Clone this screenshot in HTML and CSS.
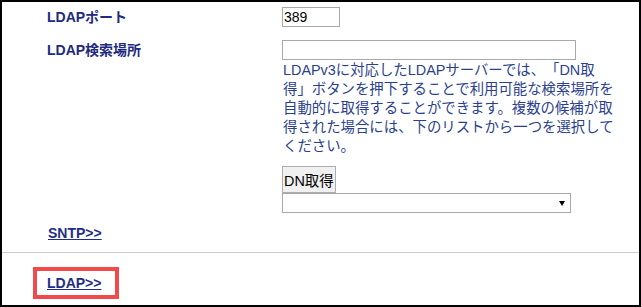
FILE: index.html
```html
<!DOCTYPE html>
<html lang="ja">
  <head>
    <meta charset="UTF-8" />
    <title>LDAP設定</title>
    <link rel="stylesheet" href="styles.css">
  </head>
  <body>
    <div class="frame">
      <div class="settings">
        <div class="row">
          <div class="label">LDAPポート</div>
          <div class="value">
            <input type="text" class="port" value="389" />
          </div>
        </div>
        <div class="row row-base">
          <div class="label">LDAP検索場所</div>
          <div class="value">
            <input type="text" class="base" />
            <p class="note">LDAPv3に対応したLDAPサーバーでは、「DN取得」ボタンを押下することで利用可能な検索場所を自動的に取得することができます。複数の候補が取得された場合には、下のリストから一つを選択してください。</p>
            <button type="button" class="dn-button">DN取得</button>
            <div class="select-wrap">
              <select class="dn-list"><option></option></select>
              <span class="arrow"></span>
            </div>
          </div>
        </div>
        <a href="#" class="link sntp">SNTP&gt;&gt;</a>
      </div>
      <div class="footer">
        <span class="highlight"><a href="#" class="link">LDAP&gt;&gt;</a></span>
      </div>
    </div>
  </body>
</html>
```

FILE: styles.css
```css
body {
  margin: 0;
  padding: 0;
  background: #fff;
  font-family: "Liberation Sans", "Noto Sans CJK JP", sans-serif;
}
.frame {
  width: 641px;
  height: 307px;
  box-sizing: border-box;
  border: 2px solid #000;
  overflow: hidden;
}
.settings {
  padding-top: 5px;
  border-bottom: 1px solid #cccccc;
}
.row {
  display: grid;
  grid-template-columns: 235px 335px;
  padding-left: 45px;
}
.row-base {
  margin-top: 13px;
}
.label {
  font-size: 14px;
  font-weight: bold;
  line-height: 20px;
  color: #1e2a80;
}
input {
  display: block;
  height: 20px;
  box-sizing: border-box;
  border: 1px solid #a9a9a9;
  padding: 0 1px;
  font-family: inherit;
  font-size: 14px;
  color: #000;
  outline: none;
}
.port {
  width: 58px;
}
.base {
  width: 294px;
}
.note {
  margin: 1px 0 0;
  padding-left: 1px;
  font-size: 14.4px;
  line-height: 19px;
  color: #2c3f8e;
  text-spacing-trim: space-all;
}
.dn-button {
  display: block;
  margin-top: 10px;
  height: 27px;
  padding: 0 1px;
  border: 1px solid #adadad;
  border-radius: 0;
  background: #f0f0f0;
  font-family: inherit;
  font-size: 14.4px;
  color: #000;
  white-space: nowrap;
}
.select-wrap {
  position: relative;
  width: 289px;
}
.dn-list {
  display: block;
  width: 289px;
  height: 20px;
  margin: 0;
  border: 1px solid #a9a9a9;
  border-radius: 0;
  background: #fff;
  appearance: none;
  -webkit-appearance: none;
}
.arrow {
  position: absolute;
  right: 6px;
  top: 8px;
  width: 0;
  height: 0;
  border-left: 3px solid transparent;
  border-right: 3px solid transparent;
  border-top: 5px solid #000;
}
.link {
  font-size: 14px;
  font-weight: bold;
  line-height: 20px;
  color: #1f2d8a;
  text-decoration: underline;
}
.sntp {
  display: block;
  width: max-content;
  margin: 10px 0 9px 46px;
}
.footer {
  padding: 14px 0 0 31px;
}
.highlight {
  display: inline-block;
  border: 4px solid #f04a4a;
  padding: 2px 14px 2px 10px;
}
```
